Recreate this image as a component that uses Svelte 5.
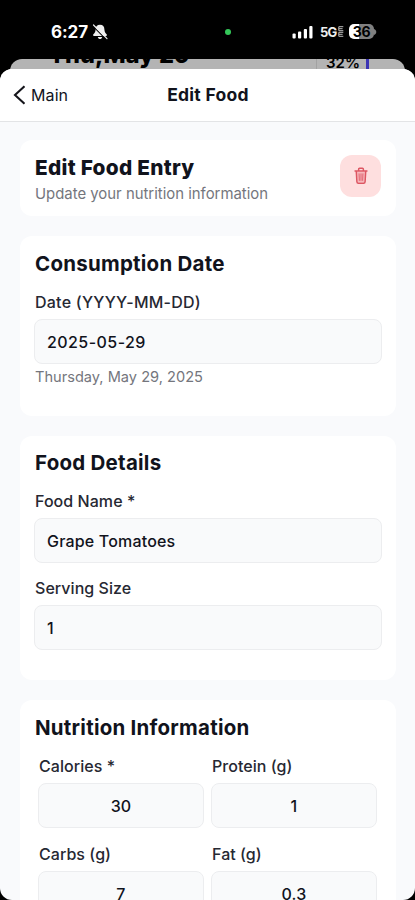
<script>
  const nutrients = [
    { label: 'Calories *', value: '30' },
    { label: 'Protein (g)', value: '1' },
    { label: 'Carbs (g)', value: '7' },
    { label: 'Fat (g)', value: '0.3' }
  ];
</script>

<div class="phone">
  <div class="status">
    <span class="time">6:27</span>
    <svg class="bell" width="16" height="16" viewBox="0 0 16 16">
      <path d="M8 .8c-2.900 0-4.400 2-4.400 4.700 0 2.900-1.600 4-2.400 5.100-.4.700 0 1.500.8 1.500h12c.8 0 1.200-.8.8-1.500-.8-1.100-2.400-2.200-2.400-5.100C12.400 2.800 10.900.8 8 .8zM5.800 13h4.400c-.2 1.300-1.100 2.100-2.200 2.100S6 14.300 5.800 13z" fill="#eee" />
      <path d="M1 2.200 14 15.400" stroke="#000" stroke-width="1.100" />
      <path d="M1.500 1 15 14.600" stroke="#eee" stroke-width="1.200" stroke-linecap="round" />
    </svg>
    <span class="dot"></span>
    <svg class="signal" width="22" height="14" viewBox="0 0 22 14">
      <rect x="0.500" y="8.500" width="3.200" height="5" rx="1" />
      <rect x="6" y="6.500" width="3.200" height="7" rx="1" />
      <rect x="11.800" y="4" width="3.200" height="9.500" rx="1" />
      <rect x="17.300" y="1" width="3.200" height="12.500" rx="1" />
    </svg>
    <span class="net">5G<svg width="6" height="11" viewBox="0 0 6 11"><path d="M5.300.7H.8v4h4.500M.8 2.700h3.800M5.300 6.300H.8v4h4.500M.8 8.300h3.800" fill="none" stroke="#bbb" stroke-width="1" /></svg></span>
    <span class="battery">36</span>
    <svg class="nub" width="3" height="6" viewBox="0 0 3 6"><path d="M0 0c3 1 3 5 0 6z" fill="#808080" /></svg>
  </div>

  <div class="behind">
    <span class="day">Thu,May 29</span>
    <span class="pct">32%</span>
    <span class="bar"></span>
  </div>

  <div class="sheet">
    <header>
      <svg width="13" height="20" viewBox="0 0 13 20"><path d="M11.500 1.200 2 10l9.500 8.800" fill="none" stroke="#15151b" stroke-width="2.100" /></svg>
      <span class="back">Main</span>
      <span class="title">Edit Food</span>
    </header>

    <main>
      <section class="intro">
        <div>
          <h1>Edit Food Entry</h1>
          <p class="sub">Update your nutrition information</p>
        </div>
        <button aria-label="Delete">
          <svg width="14" height="18" viewBox="0 0 16 20" fill="none" stroke="#dd5662" stroke-width="1.700" stroke-linecap="round" stroke-linejoin="round">
            <path d="M3.200 5h9.600l-.6 12H3.900z" fill="#ef8c94" fill-opacity=".45" stroke="none" />
            <path d="M1.200 4.200h13.600M5.300 4V2.200q0-1 1-1h3.400q1 0 1 1V4M2.600 4.400l.7 12q.1 1.800 1.800 1.800h5.800q1.700 0 1.800-1.800l.7-12" />
            <path d="M5.800 7.500l.3 7.500M8 7.500V15M10.200 7.500 9.900 15" stroke-width="1" />
          </svg>
        </button>
      </section>

      <section class="date">
        <h2>Consumption Date</h2>
        <div class="label l-date">Date (YYYY-MM-DD)</div>
        <div class="field v-date">2025-05-29</div>
        <div class="hint">Thursday, May 29, 2025</div>
      </section>

      <section class="details">
        <h2>Food Details</h2>
        <div class="label">Food Name *</div>
        <div class="field">Grape Tomatoes</div>
        <div class="label">Serving Size</div>
        <div class="field">1</div>
      </section>

      <section class="nutrition">
        <h2>Nutrition Information</h2>
        <div class="grid">
          {#each nutrients as n}
            <div class="cell">
              <div class="label">{n.label}</div>
              <div class="field">{n.value}</div>
            </div>
          {/each}
        </div>
      </section>
    </main>
  </div>
</div>

<style>
  :global(body) { margin: 0; background: #000; }
  * { box-sizing: border-box; }
  .phone {
    position: relative;
    width: 415px;
    height: 900px;
    overflow: hidden;
    background: #000;
    font-family: Inter, "Liberation Sans", sans-serif;
    color: #11131c;
    display: flex;
    flex-direction: column;
  }
  .status { height: 59px; flex: none; display: flex; align-items: center; padding: 4px 0 0 51px; color: #fff; }
  .time { font-size: 17px; font-weight: 700; width: 41px; letter-spacing: -0.1px; }
  .dot { width: 6px; height: 6px; border-radius: 50%; background: #34c759; margin-left: 117px; }
  .signal { margin-left: 61px; fill: #fff; }
  .net { display: flex; align-items: center; font-size: 13px; font-weight: 700; margin-left: 6px; width: 24px; letter-spacing: -0.7px; color: #eee; }
  .net svg { margin-left: 1px; }
  .battery {
    width: 25px; height: 15px; margin-left: 5px; border-radius: 5px;
    background: linear-gradient(90deg, #fff 38%, #808080 38%);
    color: #000; font-size: 14px; line-height: 15px; font-weight: 700; text-align: center; letter-spacing: -0.3px;
  }
  .nub { margin-left: 0; }
  .behind {
    height: 24px; margin: 0 10px -14px; flex: none; overflow: hidden; position: relative;
    background: #b4b4b4; border-radius: 12px 12px 0 0; color: #000;
  }
  .day { position: absolute; left: 39px; top: -16px; font-size: 23.500px; line-height: 24px; font-weight: 800; letter-spacing: 0.1px; }
  .pct { position: absolute; left: 306px; top: -5px; padding-left: 9px; border-left: 1px solid #a2a2a2; font-size: 15px; line-height: 18px; font-weight: 600; }
  .bar { position: absolute; left: 356px; top: 0; width: 3px; height: 14px; background: #3c35b4; }
  .sheet {
    position: relative; flex: 1; min-height: 0; overflow: hidden;
    background: #f9fafc; border-radius: 12px;
  }
  header {
    position: relative; height: 53px; background: #fff; border-bottom: 1px solid #e3e4e6;
    display: flex; align-items: center; padding-left: 13px;
  }
  .back { font-size: 16px; margin-left: 5px; letter-spacing: 0.1px; }
  .title { position: absolute; left: 0; right: 0; top: 15px; line-height: 21px; padding-left: 1px; text-align: center; font-size: 17.500px; font-weight: 700; letter-spacing: 0.280px; }
  main { padding: 18px 19px 0 20px; display: flex; flex-direction: column; gap: 20px; }
  section { background: #fff; border-radius: 12px; padding: 15px 15px 0; flex: none; }
  .intro { height: 76px; display: flex; justify-content: space-between; }
  h1, h2, p { margin: 0; }
  h1 { font-size: 20.800px; line-height: 26px; font-weight: 800; letter-spacing: 0.270px; }
  .sub { font-size: 14.900px; line-height: 24px; padding-top: 1px; color: #74767d; }
  button {
    width: 41px; height: 42px; border: 0; border-radius: 12px; padding: 0; background: #fedfdf;
    display: flex; align-items: center; justify-content: center;
  }
  h2 { font-size: 20.500px; line-height: 26px; font-weight: 700; letter-spacing: 0.240px; }
  .label { font-size: 16px; line-height: 20px; margin-top: 15px; font-weight: 500; color: #262832; letter-spacing: 0.050px; }
  .l-date { letter-spacing: 0.240px; }
  .field {
    height: 45px; margin: 7px -1px 0; padding: 0 12px; border: 1px solid #ecedef; border-radius: 8px;
    background: #f9fafb; font-size: 16px; line-height: 44px; font-weight: 500; letter-spacing: 0.180px;
  }
  .v-date { letter-spacing: 0.440px; }
  .hint { font-size: 14.600px; line-height: 20px; margin-top: 3px; color: #74767d; }
  .date { height: 180px; }
  .details { height: 244px; padding-top: 14px; }
  .nutrition { height: 260px; }
  .grid { display: grid; grid-template-columns: 166px 166px; column-gap: 7px; row-gap: 1px; padding-left: 3px; }
  .cell .label { padding-left: 1px; }
  .cell .field { margin: 7px 0 0; text-align: center; }
</style>
